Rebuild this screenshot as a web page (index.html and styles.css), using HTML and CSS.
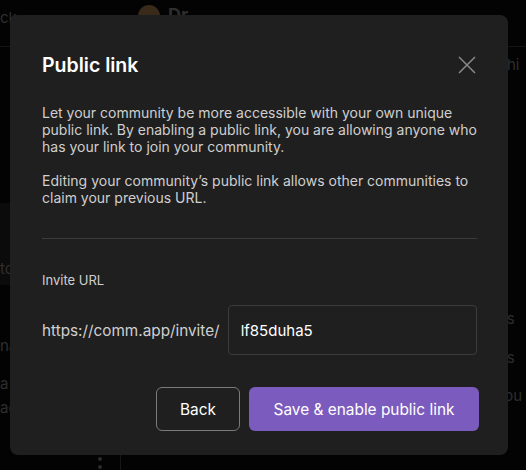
FILE: index.html
```html
<!DOCTYPE html>
<html>
<head>
<meta charset="utf-8">
<link rel="stylesheet" href="styles.css">
</head>
<body>
<div class="backdrop">
  <div class="bg-top">
    <span class="bg-text bg-ck">ck</span>
    <span class="bg-avatar"></span>
    <span class="bg-name">Dr</span>
  </div>
  <span class="bg-text bg-thi">on thi</span>
  <span class="bg-box"><span class="bg-text bg-to">to</span></span>
  <span class="bg-text bg-s1">ie’s</span>
  <span class="bg-text bg-s2">ie’s</span>
  <span class="bg-text bg-you">you</span>
  <span class="bg-text bg-na">na</span>
  <span class="bg-text bg-a">a</span>
  <span class="bg-text bg-ac">ac</span>
  <span class="bg-dots"><i></i><i></i></span>
  <span class="bg-vline"></span>
</div>

<div class="modal">
  <div class="modal-header">
    <h1 class="title">Public link</h1>
    <button class="close" aria-label="Close">
      <svg width="18" height="18" viewBox="0 0 18 18"><path d="M1 1 L17 17 M17 1 L1 17" stroke="#8a8a8a" stroke-width="1.5" fill="none"/></svg>
    </button>
  </div>
  <div class="modal-body">
    <p class="desc">Let your community be more accessible with your own unique public link. By enabling a public link, you are allowing anyone who has your link to join your community.</p>
    <p class="desc">Editing your community’s public link allows other communities to claim your previous URL.</p>
    <hr class="divider">
    <div class="label">Invite URL</div>
    <div class="url-row">
      <span class="prefix">https://comm.app/invite/</span>
      <div class="input">lf85duha5</div>
    </div>
    <div class="actions">
      <button class="btn btn-outline">Back</button>
      <button class="btn btn-primary">Save &amp; enable public link</button>
    </div>
  </div>
</div>
</body>
</html>
```

FILE: styles.css
```css
* { box-sizing: border-box; }
html, body { margin: 0; padding: 0; }
body {
  width: 526px;
  height: 470px;
  background: #030303;
  font-family: Inter, "Liberation Sans", Arial, sans-serif;
  position: relative;
  overflow: hidden;
}

.backdrop { position: absolute; inset: 0; color: #2a2a2a; }
.bg-top {
  height: 47px;
  border-bottom: 1px solid #141414;
}
.bg-avatar { position: absolute; left: 138px; top: 5px; width: 22px; height: 22px; border-radius: 50%; background: #3a2a1a; }
.bg-name { position: absolute; left: 168px; top: 4px; font-size: 18px; font-weight: 700; color: #2e2e2e; }
.bg-text { position: absolute; font-size: 15px; color: #2e2e2e; white-space: nowrap; }
.bg-ck { left: 0; top: 8px; }
.bg-thi { left: 480px; top: 55px; }
.bg-box { position: absolute; left: 0; top: 203px; width: 10px; height: 82px; background: #0b0b0b; }
.bg-to { left: 0; top: 56px; }
.bg-s1 { left: 492px; top: 309px; }
.bg-s2 { left: 492px; top: 348px; }
.bg-you { left: 496px; top: 386px; }
.bg-na { left: 0; top: 336px; }
.bg-a { left: 0; top: 374px; }
.bg-ac { left: 0; top: 398px; }
.bg-dots { position: absolute; left: 98px; top: 457px; display: flex; flex-direction: column; gap: 4px; }
.bg-dots i { display: block; width: 4px; height: 4px; border-radius: 50%; background: #2c2c2c; }
.bg-vline { position: absolute; left: 120px; top: 455px; width: 1px; height: 15px; background: #161616; }

.modal {
  position: absolute;
  left: 10px;
  top: 15px;
  width: 498px;
  height: 440px;
  background: #1f1f1f;
  border-radius: 8px;
  padding: 38px 31px 0 32px;
}

.modal-header {
  display: flex;
  justify-content: space-between;
  align-items: center;
  height: 24px;
}
.title {
  margin: 0;
  font-size: 19.5px;
  font-weight: 600;
  line-height: 24px;
  color: #ffffff;
}
.close {
  background: none;
  border: 0;
  padding: 0;
  margin-right: 1px;
  width: 18px;
  height: 18px;
  display: flex;
}

.modal-body { padding-top: 27px; }
.desc {
  margin: 0 0 17px 0;
  font-size: 14px;
  line-height: 17px;
  color: #cfcfcf;
}
.desc:last-of-type { margin-bottom: 0; }

.divider {
  border: 0;
  height: 1px;
  background: #3b3b3b;
  margin: 32px 0 0 0;
}

.label {
  margin-top: 33px;
  font-size: 13px;
  line-height: 16px;
  color: #cfcfcf;
}

.url-row {
  display: flex;
  align-items: center;
  gap: 8px;
  margin-top: 17px;
}
.prefix {
  font-size: 15.3px;
  color: #cfcfcf;
  white-space: nowrap;
}
.input {
  flex: 1;
  height: 50px;
  border: 1px solid #3c3c3c;
  border-radius: 4px;
  padding: 0 12px;
  display: flex;
  align-items: center;
  font-size: 15px;
  color: #ffffff;
}

.actions {
  display: flex;
  justify-content: flex-end;
  gap: 9px;
  margin-top: 32px;
  margin-right: -2px;
}
.btn {
  height: 44px;
  border-radius: 6px;
  font-family: Inter, "Liberation Sans", Arial, sans-serif;
  font-size: 15.4px;
  color: #ffffff;
  cursor: pointer;
}
.btn-outline {
  width: 84px;
  background: transparent;
  border: 1px solid #7a7a7a;
}
.btn-primary {
  width: 230px;
  background: #7b5bbd;
  border: 0;
}
```
